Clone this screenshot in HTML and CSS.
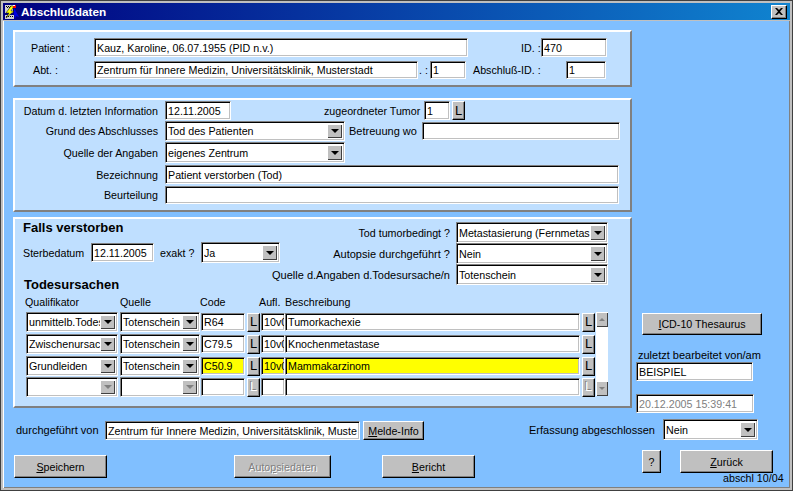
FILE: index.html
```html
<!DOCTYPE html>
<html lang="de">
<head>
<meta charset="utf-8">
<title>Abschlußdaten</title>
<link rel="stylesheet" href="styles.css">
</head>
<body>
<div class="window">
  <header class="titlebar">
    <svg class="appicon" width="16" height="16" viewBox="0 0 16 16">
      <rect x="0" y="0" width="16" height="16" fill="#000080"/>
      <path d="M1 1h8v8H1zM1 11h9v4H1z" fill="#d0d0d0"/>
      <path d="M2 2h1v1H2zM4 2h1v1H4zM6 2h1v1H6zM3 3h1v1H3zM5 3h1v1H5zM2 12h1v1H2zM4 12h1v1H4zM6 12h1v1H6zM8 12h1v1H8z" fill="#000"/>
      <path d="M7 2 2 9h3l-3 5 8-7H7l3-5z" fill="#ffff00" stroke="#000" stroke-width=".5"/>
      <rect x="9" y="1" width="3" height="3" fill="#ff0000"/>
      <rect x="9" y="1" width="2" height="1" fill="#fff"/>
      <path d="M10 4l5 9-3-1-1 3-1-4z" fill="#0000e0"/>
    </svg>
    <span class="title">Abschlußdaten</span>
    <button class="btn closebtn" aria-label="Schließen">
      <svg width="8" height="7" viewBox="0 0 8 7"><path d="M0 0h2l2 2 2-2h2L5 3.500 8 7H6L4 5 2 7H0l3-3.500z" fill="#000"/></svg>
    </button>
  </header>

  <main class="content">
    <div class="top">
      <div class="panels">
        <section class="panel p1">
          <div class="row r19">
            <span class="lbl ml-16 w-63">Patient :</span>
            <div class="field w-374">Kauz, Karoline, 06.07.1955 (PID n.v.)</div>
            <span class="lbl ml-53 w-20">ID. :</span>
            <div class="field w-66">470</div>
          </div>
          <div class="row r18 mt-4">
            <span class="lbl ml-18 w-61">Abt. :</span>
            <div class="field w-324">Zentrum für Innere Medizin, Universitätsklinik, Musterstadt</div>
            <span class="lbl ml-1 w-11">. :</span>
            <div class="field w-36">1</div>
            <span class="lbl ml-7 w-93">Abschluß-ID. :</span>
            <div class="field w-40">1</div>
          </div>
        </section>

        <section class="panel p2">
          <div class="row r19">
            <span class="lbl right w-143">Datum d. letzten Information</span>
            <div class="field ml-7 w-66">12.11.2005</div>
            <span class="lbl ml-93 w-100">zugeordneter Tumor</span>
            <div class="field w-26">1</div>
            <button class="btn lbtn ml-2">L</button>
          </div>
          <div class="row r20 mt-1">
            <span class="lbl right w-143">Grund des Abschlusses</span>
            <div class="select ml-7 w-180"><span class="val">Tod des Patienten</span><span class="drop"><i class="arrow"></i></span></div>
            <span class="lbl wide ml-4 w-73">Betreuung wo</span>
            <div class="field w-198 h-18">&nbsp;</div>
          </div>
          <div class="row r21 mt-1">
            <span class="lbl right w-143">Quelle der Angaben</span>
            <div class="select ml-7 w-180"><span class="val">eigenes Zentrum</span><span class="drop"><i class="arrow"></i></span></div>
          </div>
          <div class="row r19 mt-2">
            <span class="lbl right w-143">Bezeichnung</span>
            <div class="field ml-7 w-454">Patient verstorben (Tod)</div>
          </div>
          <div class="row r18 mt-2">
            <span class="lbl right w-143">Beurteilung</span>
            <div class="field ml-7 w-454">&nbsp;</div>
          </div>
        </section>

        <section class="panel p3">
          <div class="upper">
            <div class="fallcol">
              <h2 class="head">Falls verstorben</h2>
              <div class="row r21 sterbe">
                <span class="lbl w-68">Sterbedatum</span>
                <div class="field w-63 h-19">12.11.2005</div>
                <span class="lbl ml-6 w-41">exakt ?</span>
                <div class="select w-79"><span class="val">Ja</span><span class="drop"><i class="arrow"></i></span></div>
              </div>
              <h2 class="head causes">Todesursachen</h2>
            </div>
            <div class="tumorcol">
              <div class="row r21">
                <span class="lbl endlbl">Tod tumorbedingt ?</span>
                <div class="select ml-6 w-152"><span class="val">Metastasierung (Fernmetas</span><span class="drop"><i class="arrow"></i></span></div>
              </div>
              <div class="row r21">
                <span class="lbl endlbl wide">Autopsie durchgeführt ?</span>
                <div class="select ml-6 w-152"><span class="val">Nein</span><span class="drop"><i class="arrow"></i></span></div>
              </div>
              <div class="row r21">
                <span class="lbl endlbl wide">Quelle d.Angaben d.Todesursache/n</span>
                <div class="select ml-6 w-152"><span class="val">Totenschein</span><span class="drop"><i class="arrow"></i></span></div>
              </div>
            </div>
          </div>

          <div class="thead">
            <span class="lbl w-95">Qualifikator</span>
            <span class="lbl w-80">Quelle</span>
            <span class="lbl w-59">Code</span>
            <span class="lbl w-26">Aufl.</span>
            <span class="lbl">Beschreibung</span>
          </div>

          <div class="tablewrap">
            <div class="rows">
              <div class="trow">
                <div class="select w-92"><span class="val">unmittelb.Todesursache</span><span class="drop"><i class="arrow"></i></span></div>
                <div class="select ml-2 w-80"><span class="val">Totenschein</span><span class="drop"><i class="arrow"></i></span></div>
                <div class="field ml-1 w-44 h-18">R64</div>
                <button class="btn lbtn ml-2 h-19">L</button>
                <div class="field ml-1 w-24 h-18">10v0</div>
                <div class="field w-295 h-18">Tumorkachexie</div>
                <button class="btn lbtn ml-2 h-19">L</button>
              </div>
              <div class="trow">
                <div class="select w-92"><span class="val">Zwischenursache</span><span class="drop"><i class="arrow"></i></span></div>
                <div class="select ml-2 w-80"><span class="val">Totenschein</span><span class="drop"><i class="arrow"></i></span></div>
                <div class="field ml-1 w-44 h-18">C79.5</div>
                <button class="btn lbtn ml-2 h-19">L</button>
                <div class="field ml-1 w-24 h-18">10v0</div>
                <div class="field w-295 h-18">Knochenmetastase</div>
                <button class="btn lbtn ml-2 h-19">L</button>
              </div>
              <div class="trow">
                <div class="select w-92"><span class="val">Grundleiden</span><span class="drop"><i class="arrow"></i></span></div>
                <div class="select ml-2 w-80"><span class="val">Totenschein</span><span class="drop"><i class="arrow"></i></span></div>
                <div class="field mark ml-1 w-44 h-18">C50.9</div>
                <button class="btn lbtn ml-2 h-19">L</button>
                <div class="field mark ml-1 w-24 h-18">10v0</div>
                <div class="field mark w-295 h-18">Mammakarzinom</div>
                <button class="btn lbtn ml-2 h-19">L</button>
              </div>
              <div class="trow">
                <div class="select w-92"><span class="val">&nbsp;</span><span class="drop off"><i class="arrow"></i></span></div>
                <div class="select ml-2 w-80"><span class="val">&nbsp;</span><span class="drop off"><i class="arrow"></i></span></div>
                <div class="field ml-1 w-44 h-18">&nbsp;</div>
                <button class="btn lbtn ml-2 h-19 off">L</button>
                <div class="field ml-1 w-24 h-18">&nbsp;</div>
                <div class="field w-295 h-18">&nbsp;</div>
                <button class="btn lbtn ml-2 h-19 off">L</button>
              </div>
            </div>
            <div class="scrollbar">
              <span class="sbtn"><i class="tri up"></i></span>
              <span class="strack"></span>
              <span class="sbtn"><i class="tri"></i></span>
            </div>
          </div>
        </section>
      </div>

      <aside class="side">
        <button class="btn icd"><span><u>I</u>CD-10 Thesaurus</span></button>
        <span class="lbl wide edited">zuletzt bearbeitet von/am</span>
        <div class="field w-117 h-19">BEISPIEL</div>
        <div class="field w-118 h-19 stamp">20.12.2005 15:39:41</div>
      </aside>
    </div>

    <div class="lower1">
      <span class="lbl wide w-89">durchgeführt von</span>
      <div class="field w-255 h-19 drop2">Zentrum für Innere Medizin, Universitätsklinik, Muste</div>
      <button class="btn melde"><span><u>M</u>elde-Info</span></button>
      <span class="lbl wide erf">Erfassung abgeschlossen</span>
      <div class="select w-95"><span class="val">Nein</span><span class="drop"><i class="arrow"></i></span></div>
    </div>

    <div class="lower2">
      <button class="btn big"><span><u>S</u>peichern</span></button>
      <button class="btn big auto" disabled><span class="dis">Auto<u>p</u>siedaten</span></button>
      <button class="btn big bericht"><span><u>B</u>ericht</span></button>
      <button class="btn help">?</button>
      <div class="back">
        <button class="btn zurueck"><span><u>Z</u>urück</span></button>
        <span class="lbl version">abschl 10/04</span>
      </div>
    </div>
  </main>
</div>
</body>
</html>
```

FILE: styles.css
```css
* { box-sizing: border-box; }
html, body { margin: 0; padding: 0; width: 793px; height: 491px; overflow: hidden; }
body { font: 10.7px/14px "Liberation Sans", Arial, sans-serif; color: #000; }

.window {
  width: 793px; height: 491px;
  background: #80bfff;
  border: 3px solid #c0c0c0;
  box-shadow: inset 1px 1px 0 #fff, inset -1px -1px 0 #808080;
  outline: 1px solid #404040;
  outline-offset: -1px;
  display: flex; flex-direction: column;
}
.titlebar {
  height: 18px; flex: none;
  display: flex; align-items: center;
  background: linear-gradient(90deg, #000080, #1084d0);
  border-bottom: 1px solid #c0c0c0;
  padding: 0 3px 0 1px;
}
.appicon { flex: none; }
.title { margin-left: 1px; color: #fff; font-weight: bold; font-size: 11.8px; }

.content { flex: 1; padding-left: 10px; display: flex; flex-direction: column; padding-top: 9px; min-height: 0; }
.top { display: flex; height: 383px; flex: none; }
.panels { width: 619px; flex: none; }
.panel {
  width: 619px;
  background: #bfdfff;
  border: 2px solid;
  border-color: #fff #808080 #808080 #fff;
}
.p1 { height: 57px; padding-top: 6px; }
.p2 { height: 114px; margin-top: 11px; padding-top: 1px; }
.p3 { height: 191px; margin-top: 5px; padding-top: 0; }

.row { display: flex; align-items: center; }
.r18 { height: 18px; } .r19 { height: 19px; } .r20 { height: 20px; } .r21 { height: 21px; }

.lbl { flex: none; white-space: nowrap; display: block; }
.wide { font-size: 11px; }
.right { text-align: right; }
.endlbl { width: 165px; display: flex; justify-content: flex-end; }

.field {
  flex: none;
  height: 100%;
  background: #fff;
  border: 1px solid;
  border-color: #808080 #fff #fff #808080;
  box-shadow: inset 1px 1px 0 #000, inset -1px -1px 0 #c0c0c0;
  padding: 0 1px 0 2px;
  white-space: nowrap; overflow: hidden;
  display: flex; align-items: center;
}
.mark { background: #ffff00; }

.select {
  flex: none;
  height: 100%;
  display: flex; align-items: stretch;
  background: #fff;
  border: 1px solid;
  border-color: #808080 #fff #fff #808080;
  box-shadow: inset 1px 1px 0 #000, inset -1px -1px 0 #c0c0c0;
  padding: 2px;
}
.val { flex: 1; min-width: 0; white-space: nowrap; overflow: hidden; align-self: center; }
.drop {
  flex: none; width: 15px;
  background: #c0c0c0;
  box-shadow: inset 1px 1px 0 #fff, inset -1px -1px 0 #404040;
  display: flex; align-items: center; justify-content: center;
}
.arrow { width: 0; height: 0; border: 4px solid transparent; border-top: 4px solid #000; border-bottom: 0; }
.drop.off .arrow { border-top-color: #808080; }

.btn {
  flex: none;
  padding: 0; margin: 0;
  font: inherit; color: #000;
  background: #c0c0c0;
  border: 1px solid;
  border-color: #fff #000 #000 #fff;
  box-shadow: inset -1px -1px 0 #808080;
  display: flex; align-items: center; justify-content: center;
}
.closebtn { margin-left: auto; width: 16px; height: 14px; }
.lbtn { width: 13px; height: 100%; font-size: 13px; }
.lbtn.off { color: #fff; text-shadow: -1px -1px 0 #808080; }

.upper { display: flex; height: 69px; }
.fallcol { width: 270px; flex: none; padding-left: 8px; }
.head { margin: 0; font-size: 13px; line-height: 15px; font-weight: bold; white-space: nowrap; padding-top: 1px; height: 16px; }
.sterbe { margin-top: 7px; }
.causes { margin-top: 13px; padding-left: 1px; }
.tumorcol { padding-top: 3px; }

.thead { display: flex; padding-left: 10px; margin-top: 7px; height: 14px; }
.tablewrap { display: flex; padding-left: 11px; margin-top: 3px; }
.rows { display: flex; flex-direction: column; }
.trow { display: flex; align-items: center; height: 20px; margin-bottom: 2px; }
.trow:nth-child(3) { margin-bottom: 1px; }
.trow:last-child { margin-bottom: 0; }

.scrollbar { margin-left: 1px; width: 12px; height: 84px; display: flex; flex-direction: column; background: #fff; }
.sbtn {
  flex: none; height: 15px;
  background: #c0c0c0;
  box-shadow: inset 1px 1px 0 #fff, inset -1px -1px 0 #404040;
  display: flex; align-items: center; justify-content: center;
}
.strack { flex: 1; }
.tri { width: 0; height: 0; border: 3px solid transparent; border-top: 3px solid #808080; border-bottom: 0; }
.tri.up { border-top: 0; border-bottom: 3px solid #808080; }

.side { margin-left: 4px; padding-top: 283px; display: flex; flex-direction: column; align-items: flex-start; }
.icd { width: 120px; height: 22px; margin-left: 6px; }
.edited { margin: 13px 0 0 2px; line-height: 14px; }
.stamp { color: #808080; margin-top: 13px; }

.lower1 { display: flex; align-items: center; height: 21px; margin-top: 6px; padding-left: 3px; flex: none; }
.drop2 { margin-top: 2px; }
.melde { width: 61px; height: 19px; margin: 2px 0 0 3px; }
.erf { margin-left: 105px; width: 134px; margin-top: 1px; }

.lower2 { display: flex; align-items: flex-start; margin-top: 10px; flex: none; }
.big { width: 93px; height: 23px; margin: 5px 0 0 1px; }
.auto { width: 97px; margin-left: 127px; }
.bericht { margin-left: 51px; }
.dis { color: #808080; text-shadow: 1px 1px 0 #fff; }
.help { width: 19px; height: 23px; margin-left: 167px; }
.back { margin-left: 19px; display: flex; flex-direction: column; align-items: flex-start; }
.zurueck { width: 93px; height: 23px; }
.version { margin: -1px 0 0 43px; line-height: 13px; }

/* spacing and size helpers come last so that they win over the components */
.mt-1 { margin-top: 1px; } .mt-2 { margin-top: 2px; } .mt-4 { margin-top: 4px; }
.ml-1 { margin-left: 1px; } .ml-2 { margin-left: 2px; } .ml-4 { margin-left: 4px; }
.ml-6 { margin-left: 6px; } .ml-7 { margin-left: 7px; } .ml-16 { margin-left: 16px; } .ml-18 { margin-left: 18px; }
.ml-53 { margin-left: 53px; } .ml-93 { margin-left: 93px; }
.w-11 { width: 11px; } .w-20 { width: 20px; } .w-24 { width: 24px; } .w-26 { width: 26px; } .w-36 { width: 36px; }
.w-40 { width: 40px; } .w-41 { width: 41px; } .w-44 { width: 44px; } .w-59 { width: 59px; } .w-61 { width: 61px; }
.w-63 { width: 63px; } .w-66 { width: 66px; } .w-68 { width: 68px; } .w-73 { width: 73px; } .w-79 { width: 79px; }
.w-80 { width: 80px; } .w-89 { width: 89px; } .w-92 { width: 92px; } .w-93 { width: 93px; } .w-95 { width: 95px; }
.w-100 { width: 100px; } .w-117 { width: 117px; } .w-118 { width: 118px; } .w-143 { width: 143px; } .w-152 { width: 152px; }
.w-180 { width: 180px; } .w-198 { width: 198px; } .w-255 { width: 255px; } .w-295 { width: 295px; } .w-324 { width: 324px; }
.w-374 { width: 374px; } .w-454 { width: 454px; }
.h-18 { height: 18px; } .h-19 { height: 19px; }
```
